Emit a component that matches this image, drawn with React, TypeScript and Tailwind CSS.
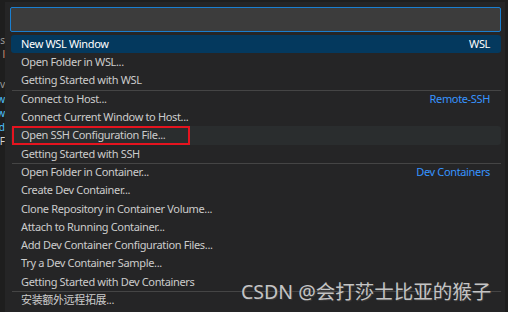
import React from "react";

type Row = { label: string; tag?: string; sep?: boolean; active?: boolean; hover?: boolean; boxed?: boolean };

const rows: Row[] = [
  { label: "New WSL Window", tag: "WSL", active: true },
  { label: "Open Folder in WSL..." },
  { label: "Getting Started with WSL" },
  { label: "Connect to Host...", tag: "Remote-SSH", sep: true },
  { label: "Connect Current Window to Host..." },
  { label: "Open SSH Configuration File...", hover: true, boxed: true },
  { label: "Getting Started with SSH" },
  { label: "Open Folder in Container...", tag: "Dev Containers", sep: true },
  { label: "Create Dev Container..." },
  { label: "Clone Repository in Container Volume..." },
  { label: "Attach to Running Container..." },
  { label: "Add Dev Container Configuration Files..." },
  { label: "Try a Dev Container Sample..." },
  { label: "Getting Started with Dev Containers" },
  { label: "安装额外远程拓展...", sep: true },
];

export default function App() {
  return (
    <div
      className="relative w-[508px] h-[312px] overflow-hidden bg-[#1e1e1e] flex"
      style={{ fontFamily: '"Noto Sans", "Open Sans", "Noto Sans CJK SC", sans-serif' }}
    >
      {/* editor peeking on the left */}
      <div className="w-[5px] shrink-0 overflow-hidden flex flex-col items-end pt-[33px] text-[10px]">
        <div className="h-[14px] leading-[14px] text-[#9a9a9a] whitespace-nowrap">ss</div>
        <div className="h-[14px] leading-[14px] text-[#ce9178] whitespace-nowrap">l</div>
        <div className="h-[16px]" />
        <div className="h-[15px] leading-[15px] text-[#9a9a9a] whitespace-nowrap">v</div>
        <div className="h-[14px] leading-[14px] text-[#4fc1ff] whitespace-nowrap">w</div>
        <div className="h-[14px] leading-[14px] text-[#4fc1ff] whitespace-nowrap">w</div>
        <div className="h-[14px] leading-[14px] text-[#4fc1ff] whitespace-nowrap">d</div>
        <div className="h-[14px] leading-[14px] text-[#d4d4d4] whitespace-nowrap">F</div>
      </div>

      {/* quick pick panel */}
      <div className="w-[500px] shrink-0 mt-[2px] bg-[#252526] pt-[5px] pl-[5px] pr-[4px] flex flex-col">
        <div className="h-[25px] rounded-[2px] border border-[#1a7fd0] bg-[#3c3c3c]" />
        <div className="mt-[3px] flex flex-col">
          {rows.map((r, i) => (
            <div key={i} className="relative">
              {r.sep && <div className="absolute left-[2px] right-[0px] top-0 h-px bg-[#454545]" />}
              <div
                className={
                  "relative ml-[1px] h-[18.3px] flex items-center pl-[10px] pr-[11px] rounded-[3px] text-[11px] tracking-[-0.35px] whitespace-nowrap " +
                  (r.active ? "bg-[#04395e] text-white" : r.hover ? "bg-[#2a2d2e] text-[#cccccc]" : "text-[#cccccc]")
                }
              >
                <span className="flex-1">{r.label}</span>
                {r.tag && (
                  <span className={r.active ? "text-white" : "text-[#3794ff]"}>{r.tag}</span>
                )}
                {r.boxed && (
                  <div className="absolute left-[1px] top-[0px] w-[178px] h-[19px] border-2 border-[#e5141f]" />
                )}
              </div>
            </div>
          ))}
        </div>
      </div>

      {/* watermark */}
      <div
        className="absolute left-[241px] top-[280px] text-[19.5px] leading-[24px] text-[#c4c4c4] whitespace-nowrap"
        style={{ fontFamily: '"Noto Sans", "Noto Sans CJK SC", sans-serif', textShadow: "1px 1px 1px #3a3a3a" }}
      >
        CSDN @会打莎士比亚的猴子
      </div>
    </div>
  );
}
